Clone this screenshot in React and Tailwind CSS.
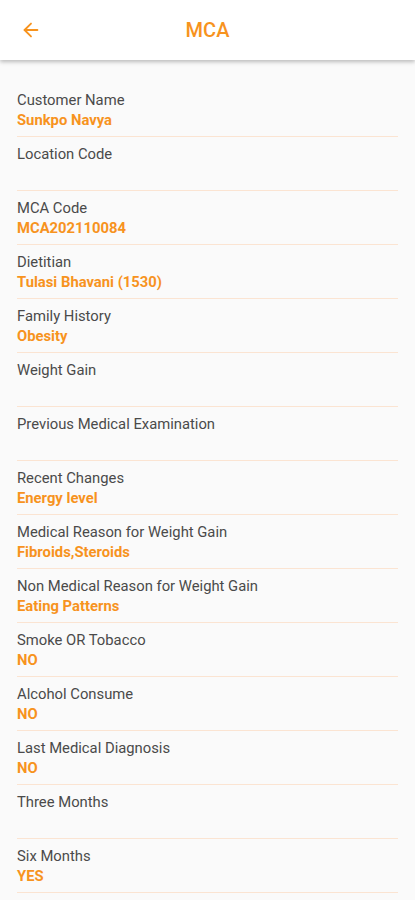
import { ArrowLeft } from "lucide-react";

const rows = [
  { label: "Customer Name", value: "Sunkpo Navya" },
  { label: "Location Code", value: "" },
  { label: "MCA Code", value: "MCA202110084" },
  { label: "Dietitian", value: "Tulasi Bhavani (1530)" },
  { label: "Family History", value: "Obesity" },
  { label: "Weight Gain", value: "" },
  { label: "Previous Medical Examination", value: "" },
  { label: "Recent Changes", value: "Energy level" },
  { label: "Medical Reason for Weight Gain", value: "Fibroids,Steroids" },
  { label: "Non Medical Reason for Weight Gain", value: "Eating Patterns" },
  { label: "Smoke OR Tobacco", value: "NO" },
  { label: "Alcohol Consume", value: "NO" },
  { label: "Last Medical Diagnosis", value: "NO" },
  { label: "Three Months", value: "" },
  { label: "Six Months", value: "YES" },
];

const Row = ({ label, value }) => (
  <div className="flex flex-col pt-[7px] pb-[6px] border-b border-[#fbe4d2]">
    <div className="h-[20px] leading-[20px] text-[14.8px] text-[#4a4a4a]">{label}</div>
    <div className="h-[20px] leading-[20px] text-[14.8px] font-bold text-[#f7931e]">{value}</div>
  </div>
);

export default function App() {
  return (
    <div className="w-[415px] h-[900px] overflow-hidden bg-[#fafafa] font-['Roboto',sans-serif]">
      <div className="relative h-[60px] bg-white flex items-center justify-center shadow-[0_2px_4px_rgba(0,0,0,0.25)] z-10">
        <ArrowLeft className="absolute left-[20px] top-[19px] text-[#f7931e]" size={22} strokeWidth={2} />
        <span className="text-[20px] font-medium text-[#f7931e]">MCA</span>
      </div>
      <div className="px-[17px] pt-[23px]">
        {rows.map((r) => (
          <Row key={r.label} label={r.label} value={r.value} />
        ))}
      </div>
    </div>
  );
}
